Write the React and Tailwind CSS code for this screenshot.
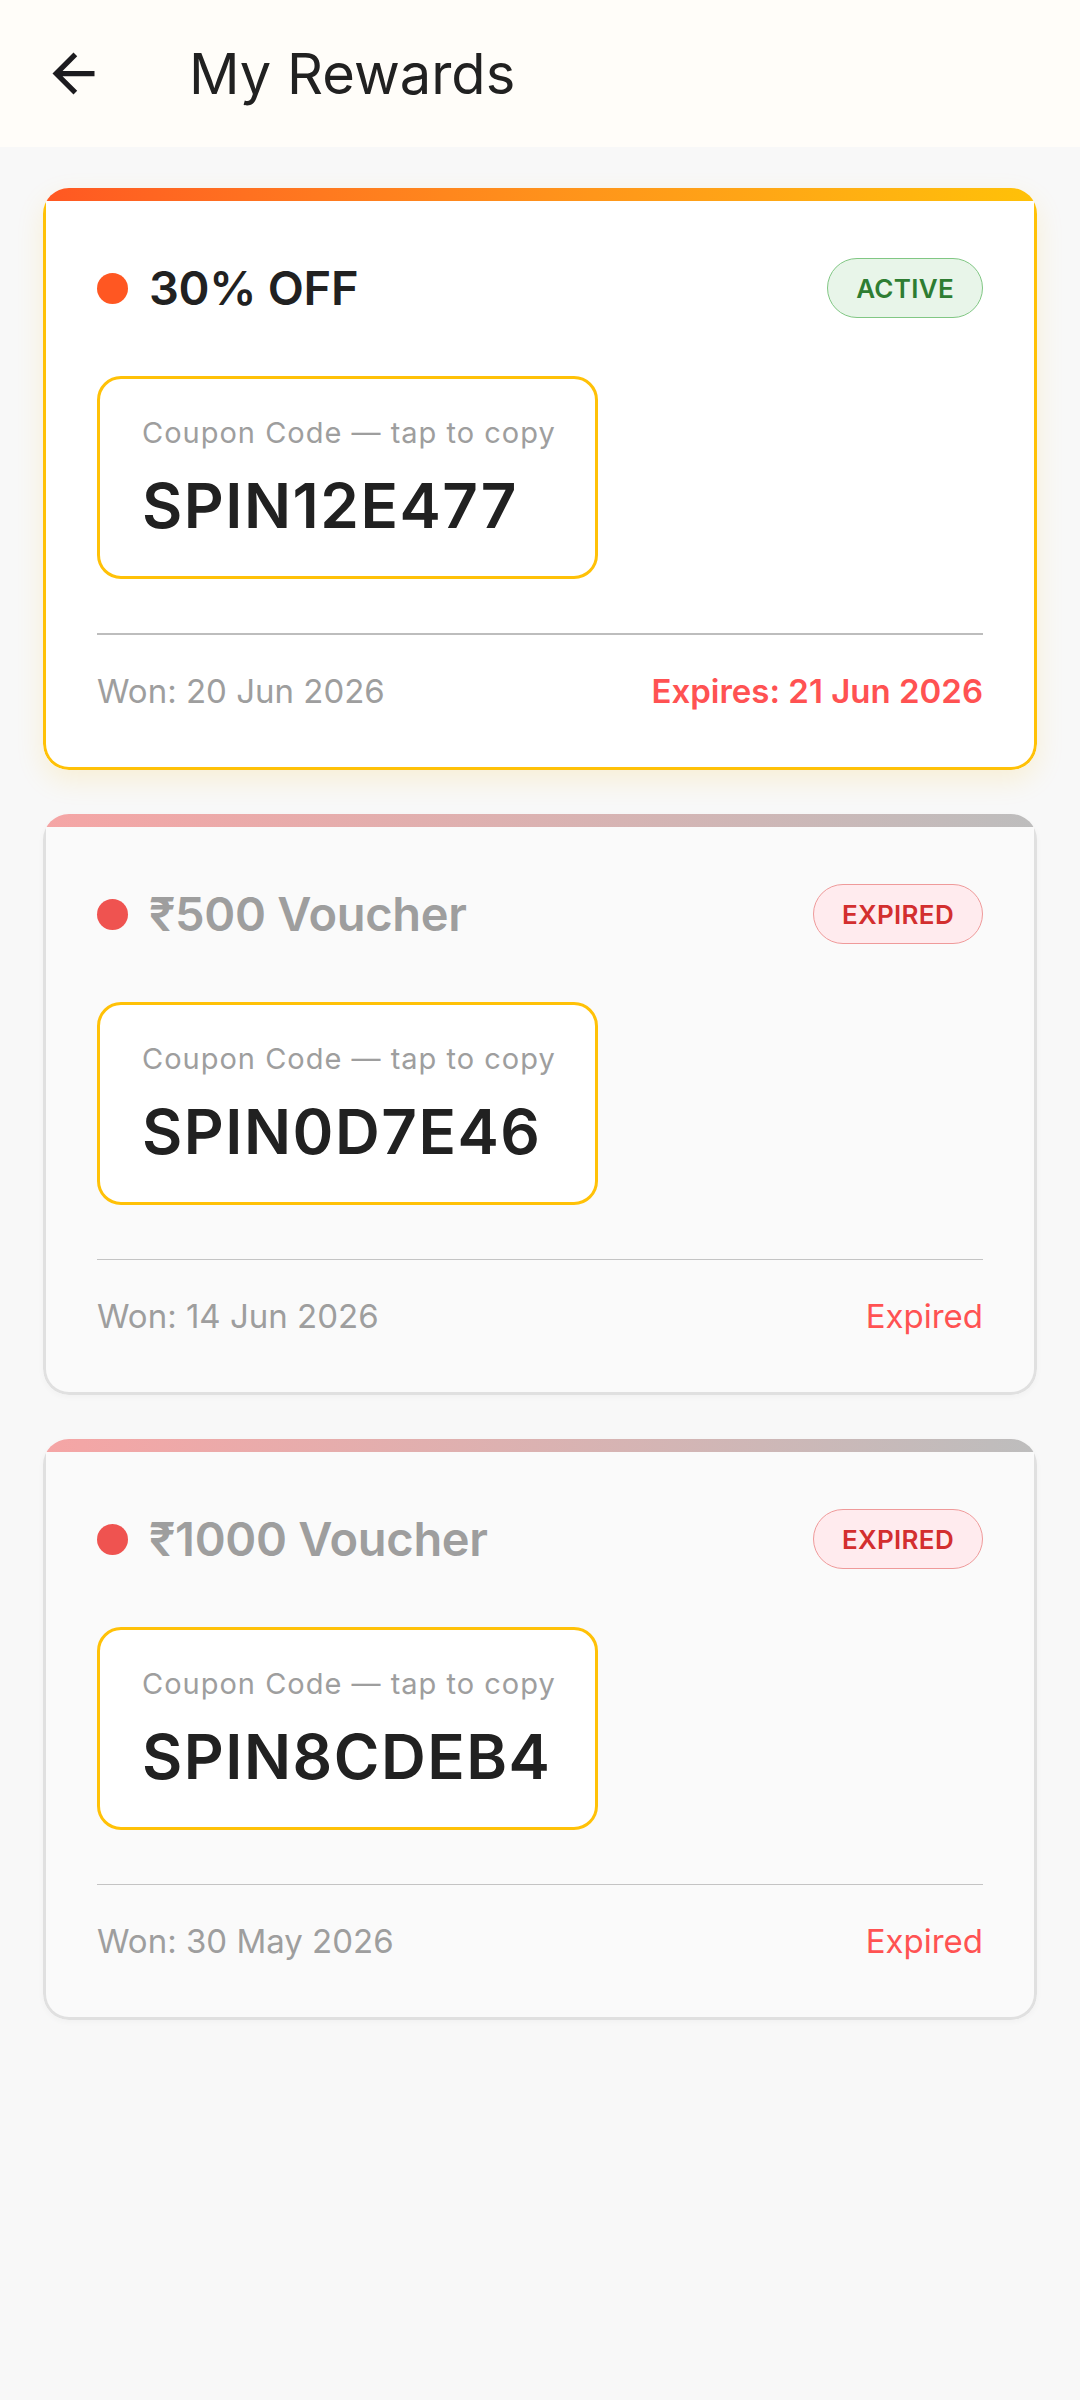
import React from "react";

const rewards = [
  {
    title: "30% OFF",
    code: "SPIN12E477",
    won: "Won: 20 Jun 2026",
    right: "Expires: 21 Jun 2026",
    active: true,
  },
  {
    title: "₹500 Voucher",
    code: "SPIN0D7E46",
    won: "Won: 14 Jun 2026",
    right: "Expired",
    active: false,
  },
  {
    title: "₹1000 Voucher",
    code: "SPIN8CDEB4",
    won: "Won: 30 May 2026",
    right: "Expired",
    active: false,
  },
];

function BackIcon() {
  return (
    <svg width="63" height="63" viewBox="0 0 24 24" fill="#1c1b1f">
      <path d="M20 11H7.83l5.59-5.59L12 4l-8 8 8 8 1.41-1.41L7.83 13H20v-2z" />
    </svg>
  );
}

function RewardCard({ r }) {
  const a = r.active;
  return (
    <div
      className={
        "rounded-[26px] overflow-hidden " +
        (a
          ? "bg-white shadow-[0_10px_28px_rgba(255,193,7,0.14)]"
          : "bg-[#fafafa] shadow-[0_2px_6px_rgba(0,0,0,0.03)]")
      }
    >
      <div
        className={
          "h-[13px] bg-gradient-to-r " +
          (a ? "from-[#ff5722] to-[#ffc107]" : "from-[#f5a5a5] to-[#bdbdbd]")
        }
      />
      <div
        className={
          "border-x-[3px] border-b-[3px] rounded-b-[26px] px-[51px] pt-[57px] " +
          (a ? "border-[#ffc107]" : "border-[#e0e0e0]")
        }
      >
        <div className="h-[60px] flex items-center justify-between">
          <div className="flex items-center gap-[21px]">
            <div
              className={
                "w-[31px] h-[31px] rounded-full " +
                (a ? "bg-[#ff5722]" : "bg-[#ef5350]")
              }
            />
            <div
              className={
                "text-[47px] leading-[58px] font-semibold tracking-[-0.3px] " +
                (a ? "text-[#212121]" : "text-[#9e9e9e]")
              }
            >
              {r.title}
            </div>
          </div>
          <div
            className={
              "h-[60px] px-[28px] rounded-full border-[1.5px] flex items-center text-[26px] font-semibold tracking-[0.3px] " +
              (a
                ? "bg-[#e8f5e9] border-[#81c784] text-[#2e7d32]"
                : "bg-[#ffebee] border-[#ef9a9a] text-[#d32f2f]")
            }
          >
            {a ? "ACTIVE" : "EXPIRED"}
          </div>
        </div>

        <div className="mt-[58px] w-[501px] h-[203px] rounded-[24px] border-[3px] border-[#ffc107] bg-white pl-[42px] pt-[36px]">
          <div className="text-[29px] leading-[36px] tracking-[1px] text-[#9e9e9e]">
            Coupon Code — tap to copy
          </div>
          <div className="mt-[19px] text-[62px] leading-[72px] font-semibold tracking-[1.5px] text-[#212121]">
            {r.code}
          </div>
        </div>

        <div
          className={
            "mt-[54px] " + (a ? "h-[2px] bg-[#bdbdbd]" : "h-px bg-[#c4c4c4]")
          }
        />

        <div className="pt-[36px] pb-[56px] flex items-center justify-between text-[33px] leading-[40px]">
          <div className="text-[#9e9e9e]">{r.won}</div>
          <div
            className={
              "text-[#ff5252] " + (a ? "font-semibold" : "font-normal")
            }
          >
            {r.right}
          </div>
        </div>
      </div>
    </div>
  );
}

export default function App() {
  return (
    <div
      className="w-[1080px] min-h-[2400px] bg-[#f8f8f8]"
      style={{ fontFamily: "Inter, 'Noto Sans', sans-serif" }}
    >
      <div className="h-[147px] bg-[#fffdf9] flex items-center pl-[42px]">
        <BackIcon />
        <div className="ml-[84px] text-[56px] leading-[70px] text-[#212121] font-normal">
          My Rewards
        </div>
      </div>
      <div className="px-[43px] pt-[41px] flex flex-col gap-[44px]">
        {rewards.map((r) => (
          <RewardCard key={r.code} r={r} />
        ))}
      </div>
    </div>
  );
}
